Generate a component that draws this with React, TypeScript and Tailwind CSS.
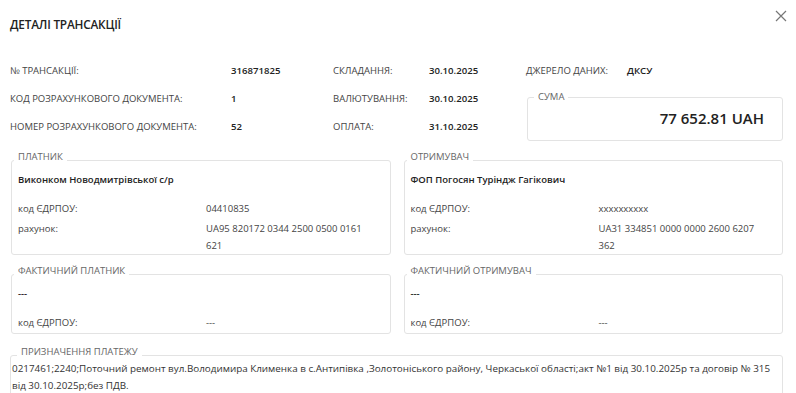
import React from "react";

const font = { fontFamily: '"Open Sans", "Noto Sans", sans-serif' };

function Box({
  title,
  className = "",
  children,
}: {
  title: string;
  className?: string;
  children: React.ReactNode;
}) {
  return (
    <fieldset className={`min-w-0 border border-[#e3e3e3] rounded-[3px] pl-[6px] pr-2 ${className}`}>
      <legend className="-ml-[4px] px-[4px] pb-[6px] text-[9.5px] leading-[14px] text-[#666]">{title}</legend>
      {children}
    </fieldset>
  );
}

function InfoRow({ label, value }: { label: string; value: string }) {
  return (
    <>
      <div className="text-[9.5px] text-[#444] flex items-center uppercase">{label}</div>
      <div className="text-[9.6px] text-[#222] flex items-center font-semibold">{value}</div>
    </>
  );
}

function KV({ label, value }: { label: string; value: React.ReactNode }) {
  return (
    <div className="flex text-[9.5px] leading-[17px] text-[#444]">
      <div className="w-[188px] shrink-0">{label}</div>
      <div className="flex-1 min-w-0 pr-[8px]">{value}</div>
    </div>
  );
}

function Party({ title, name, code, account }: { title: string; name: string; code: string; account?: string }) {
  return (
    <Box title={title} className={account ? "pb-0" : "pb-[2px]"}>
      <div className="text-[9.5px] font-semibold text-[#222] leading-[16px] mt-[2px]">{name}</div>
      <div className="mt-[12px] flex flex-col gap-[3px]">
        <KV label="код ЄДРПОУ:" value={code} />
        {account && <KV label="рахунок:" value={account} />}
      </div>
    </Box>
  );
}

export default function App() {
  return (
    <div className="w-[796px] h-[393px] bg-white overflow-hidden" style={font}>
      <div className="h-[50px] flex items-center justify-between pl-[10px] pr-[9px]">
        <h1 className="text-[11.8px] font-semibold text-[#222] tracking-[-0.2px]">ДЕТАЛІ ТРАНСАКЦІЇ</h1>
        <svg width="12" height="12" viewBox="0 0 12 12" className="-mt-[18px]" fill="none" stroke="#777" strokeWidth="1.2">
          <path d="M1 1L11 11M11 1L1 11" />
        </svg>
      </div>

      <div className="pt-[7px] pl-[10px] pr-[13px] grid grid-cols-[221px_102px_96px_97px_101px_1fr] grid-rows-[28px_28px_28px]">
        <InfoRow label="№ ТРАНСАКЦІЇ:" value="316871825" />
        <InfoRow label="СКЛАДАННЯ:" value="30.10.2025" />
        <InfoRow label="ДЖЕРЕЛО ДАНИХ:" value="ДКСУ" />
        <InfoRow label="КОД РОЗРАХУНКОВОГО ДОКУМЕНТА:" value="1" />
        <InfoRow label="ВАЛЮТУВАННЯ:" value="30.10.2025" />
        <fieldset className="col-span-2 row-span-2 ml-px h-[51px] self-end border border-[#e3e3e3] rounded-[3px] px-[18px]">
          <legend className="-ml-[12px] px-[4px] text-[9.5px] leading-[14px] text-[#666]">СУМА</legend>
          <div className="text-right text-[15px] font-semibold text-[#222] leading-[20px] mt-[4px]">77 652.81 UAH</div>
        </fieldset>
        <InfoRow label="НОМЕР РОЗРАХУНКОВОГО ДОКУМЕНТА:" value="52" />
        <InfoRow label="ОПЛАТА:" value="31.10.2025" />
      </div>

      <div className="mt-[9px] pl-[11px] pr-[13px] grid grid-cols-2 gap-x-[13px] gap-y-[9px]">
        <Party
          title="ПЛАТНИК"
          name="Виконком Новодмитрівської с/р"
          code="04410835"
          account="UA95 820172 0344 2500 0500 0161 621"
        />
        <Party
          title="ОТРИМУВАЧ"
          name="ФОП Погосян Туріндж Гагікович"
          code="xxxxxxxxxx"
          account="UA31 334851 0000 0000 2600 6207 362"
        />
        <Party title="ФАКТИЧНИЙ ПЛАТНИК" name="---" code="---" />
        <Party title="ФАКТИЧНИЙ ОТРИМУВАЧ" name="---" code="---" />
      </div>

      <div className="mt-[11px] pl-[10px] pr-[13px]">
        <fieldset className="border border-[#e3e3e3] rounded-[3px] pl-[1px] pr-2 pb-2">
          <legend className="ml-[5px] px-[4px] pb-[6px] text-[9.5px] leading-[14px] text-[#666]">ПРИЗНАЧЕННЯ ПЛАТЕЖУ</legend>
          <p className="text-[9.85px] leading-[17px] text-[#333] -mt-[5px]">
            0217461;2240;Поточний ремонт вул.Володимира Клименка в с.Антипівка ,Золотоніського району, Черкаської області;акт №1 від 30.10.2025р та договір № 315 від 30.10.2025р;без ПДВ.
          </p>
        </fieldset>
      </div>
    </div>
  );
}
